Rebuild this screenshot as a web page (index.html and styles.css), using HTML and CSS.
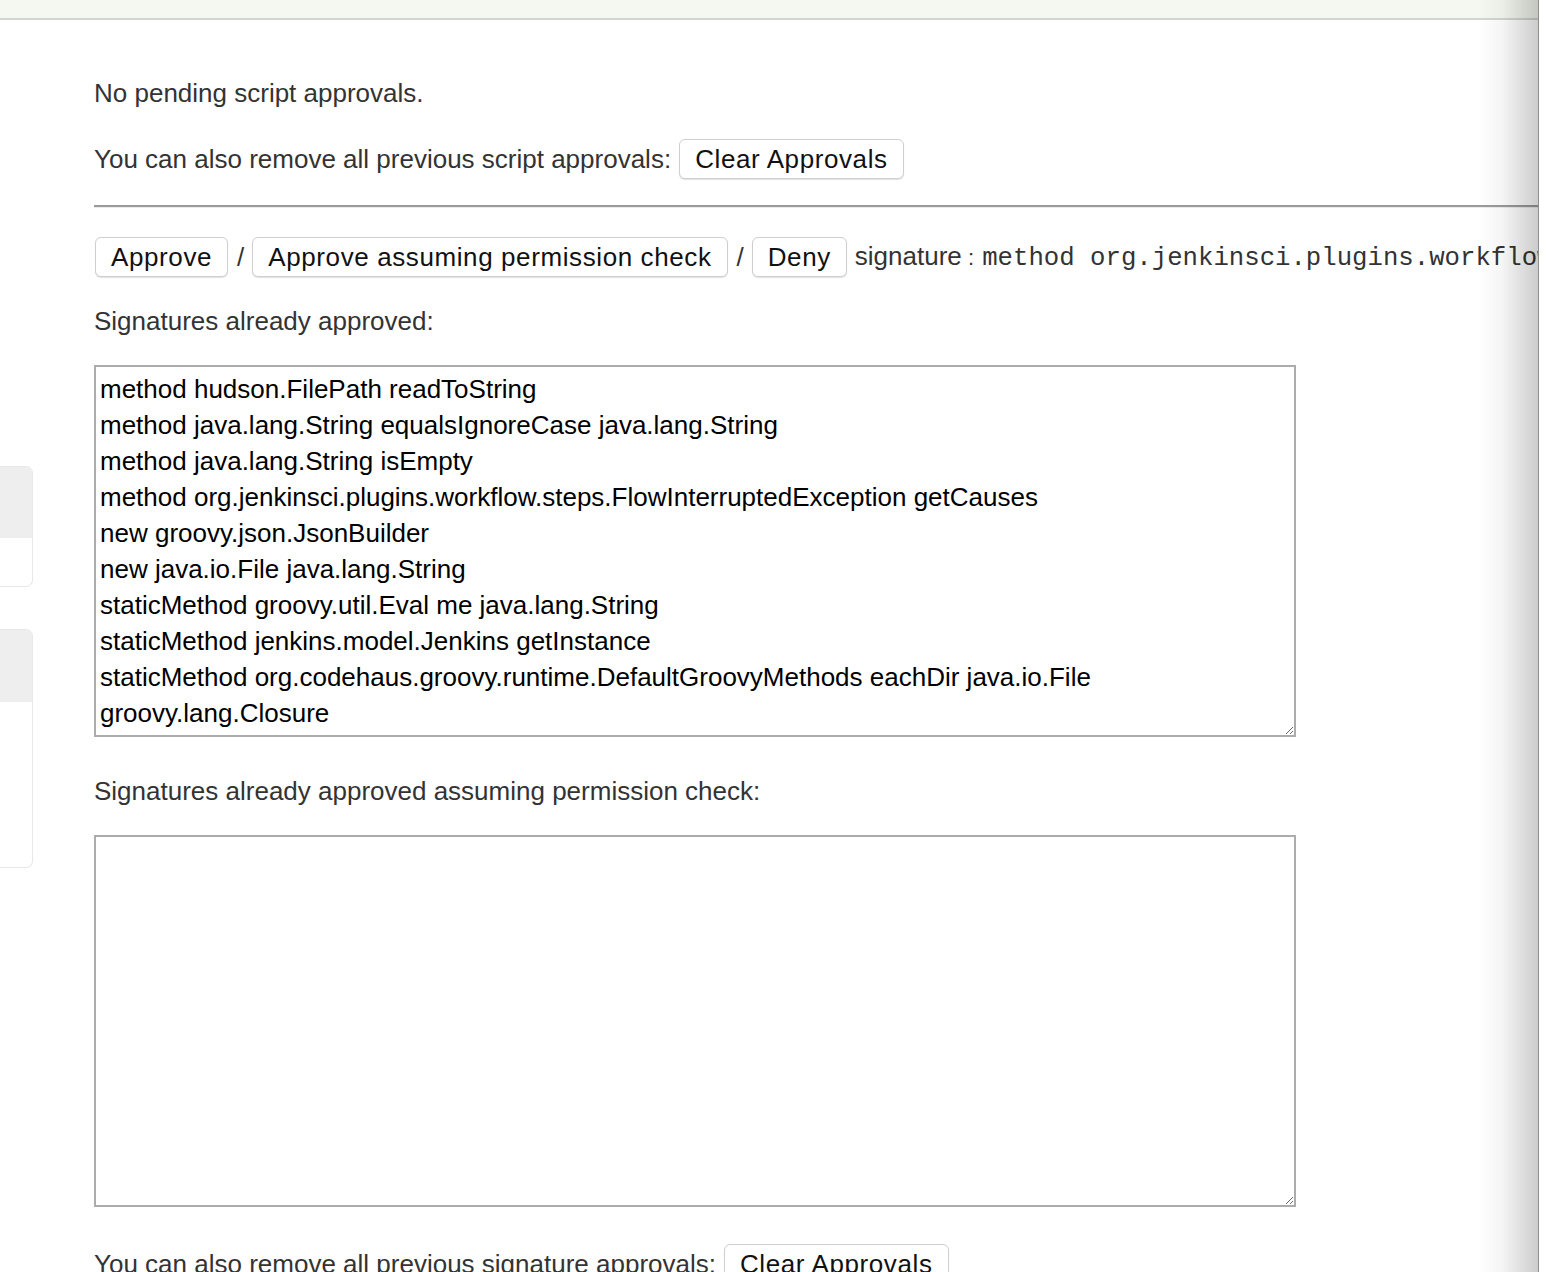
FILE: index.html
```html
<!DOCTYPE html>
<html>
<head>
<meta charset="utf-8">
<title>Script Approval</title>
<link rel="stylesheet" href="styles.css">
</head>
<body>
<div class="viewport">
  <header class="topbar"></header>
  <div class="layout">
    <aside class="side">
      <div class="card card-small"><div class="card-head"></div><div class="card-body"></div></div>
      <div class="card card-large"><div class="card-head"></div><div class="card-body"></div></div>
    </aside>
    <main class="main">
      <p class="line first">No pending script approvals.</p>
      <p class="line withbtn clear-script">You can also remove all previous script approvals: <button class="btn">Clear Approvals</button></p>
      <hr class="rule">
      <div class="sig-row">
        <button class="btn">Approve</button><span class="sep">/</span><button class="btn">Approve assuming permission check</button><span class="sep">/</span><button class="btn">Deny</button><span class="sig-label">signature<span class="colon"> : </span><code class="code">method org.jenkinsci.plugins.workflow.steps.FlowInterruptedException getCauses</code></span>
      </div>
      <p class="line label">Signatures already approved:</p>
      <textarea class="sigs" spellcheck="false">method hudson.FilePath readToString
method java.lang.String equalsIgnoreCase java.lang.String
method java.lang.String isEmpty
method org.jenkinsci.plugins.workflow.steps.FlowInterruptedException getCauses
new groovy.json.JsonBuilder
new java.io.File java.lang.String
staticMethod groovy.util.Eval me java.lang.String
staticMethod jenkins.model.Jenkins getInstance
staticMethod org.codehaus.groovy.runtime.DefaultGroovyMethods eachDir java.io.File groovy.lang.Closure</textarea>
      <p class="line label label2">Signatures already approved assuming permission check:</p>
      <textarea class="sigs" spellcheck="false"></textarea>
      <p class="line withbtn clear-sig">You can also remove all previous signature approvals: <button class="btn">Clear Approvals</button></p>
    </main>
    <div class="shade"></div>
  </div>
</div>
</body>
</html>
```
FILE: styles.css
```css
html, body {
  margin: 0;
  padding: 0;
  background: #fff;
}
body {
  font-family: "Liberation Sans", Arial, Helvetica, sans-serif;
  font-size: 26px;
  color: #333;
  overflow: hidden;
}
.viewport {
  position: relative;
  width: 1538px;
  height: 1272px;
  overflow: hidden;
  border-right: 1px solid #8e8e8e;
  background: #fff;
}
.topbar {
  height: 18px;
  background: #f5f8f0;
  border-bottom: 2px solid #d3d7cf;
}
.layout {
  display: flex;
  align-items: flex-start;
}
.side {
  width: 34px;
  flex: none;
  padding-top: 446px;
  display: flex;
  flex-direction: column;
  gap: 42px;
}
.card {
  width: 33px;
  box-sizing: border-box;
  border: 1px solid #e7e7e7;
  border-left: none;
  border-radius: 0 7px 7px 0;
  overflow: hidden;
  background: #fff;
}
.card-head {
  background: #eeeeee;
}
.card-small .card-head { height: 71px; }
.card-small .card-body { height: 48px; }
.card-large .card-head { height: 72px; }
.card-large .card-body { height: 165px; }

.main {
  flex: 1;
  min-width: 0;
  margin-left: 60px;
  padding-top: 55px;
  white-space: nowrap;
}
.line {
  margin: 0;
  line-height: 36px;
  height: 36px;
}
.withbtn {
  display: flex;
  align-items: center;
  height: 40px;
  line-height: 40px;
}
.withbtn .btn { margin-left: 8px; }
.clear-script { margin-top: 28px; }
.clear-sig { margin-top: 37px; }

.btn {
  font-family: "Liberation Sans", Arial, Helvetica, sans-serif;
  font-size: 26px;
  letter-spacing: 0.6px;
  color: #111;
  background: #fff;
  border: 1px solid #cfcfcf;
  border-radius: 6px;
  box-shadow: 0 1px 1px rgba(0, 0, 0, 0.12);
  height: 40px;
  line-height: 26px;
  padding: 6px 15px;
  box-sizing: border-box;
  cursor: pointer;
}
.rule {
  margin: 26px 0 0 0;
  border: none;
  border-top: 2px solid #9b9b9b;
  border-bottom: 1px solid #ececec;
  height: 0;
}
.sig-row {
  margin-top: 29px;
  display: flex;
  align-items: center;
  height: 40px;
  padding-left: 1px;
}
.sep {
  margin: 0 8px 0 9px;
  color: #333;
}
.sig-label {
  margin-left: 8px;
  color: #333;
}
.colon {
  font-size: 22px;
  padding-right: 2px;
}
.code {
  font-family: "Liberation Mono", "Courier New", monospace;
  font-size: 25.7px;
  color: #333;
}
.label { margin-top: 26px; }
.label2 { margin-top: 36px; }
.sigs {
  display: block;
  margin-top: 26px;
  width: 1202px;
  height: 372px;
  box-sizing: border-box;
  border: 2px solid #acacac;
  padding: 4px 4px;
  font-family: "Liberation Sans", Arial, Helvetica, sans-serif;
  font-size: 26px;
  line-height: 36px;
  color: #000;
  background: #fff;
  resize: both;
  white-space: pre-wrap;
  overflow: hidden;
}
.shade {
  position: absolute;
  top: 0;
  right: 0;
  width: 60px;
  height: 100%;
  background: linear-gradient(to right, rgba(0,0,0,0) 0%, rgba(0,0,0,0.04) 40%, rgba(0,0,0,0.2) 100%);
  pointer-events: none;
}
```
